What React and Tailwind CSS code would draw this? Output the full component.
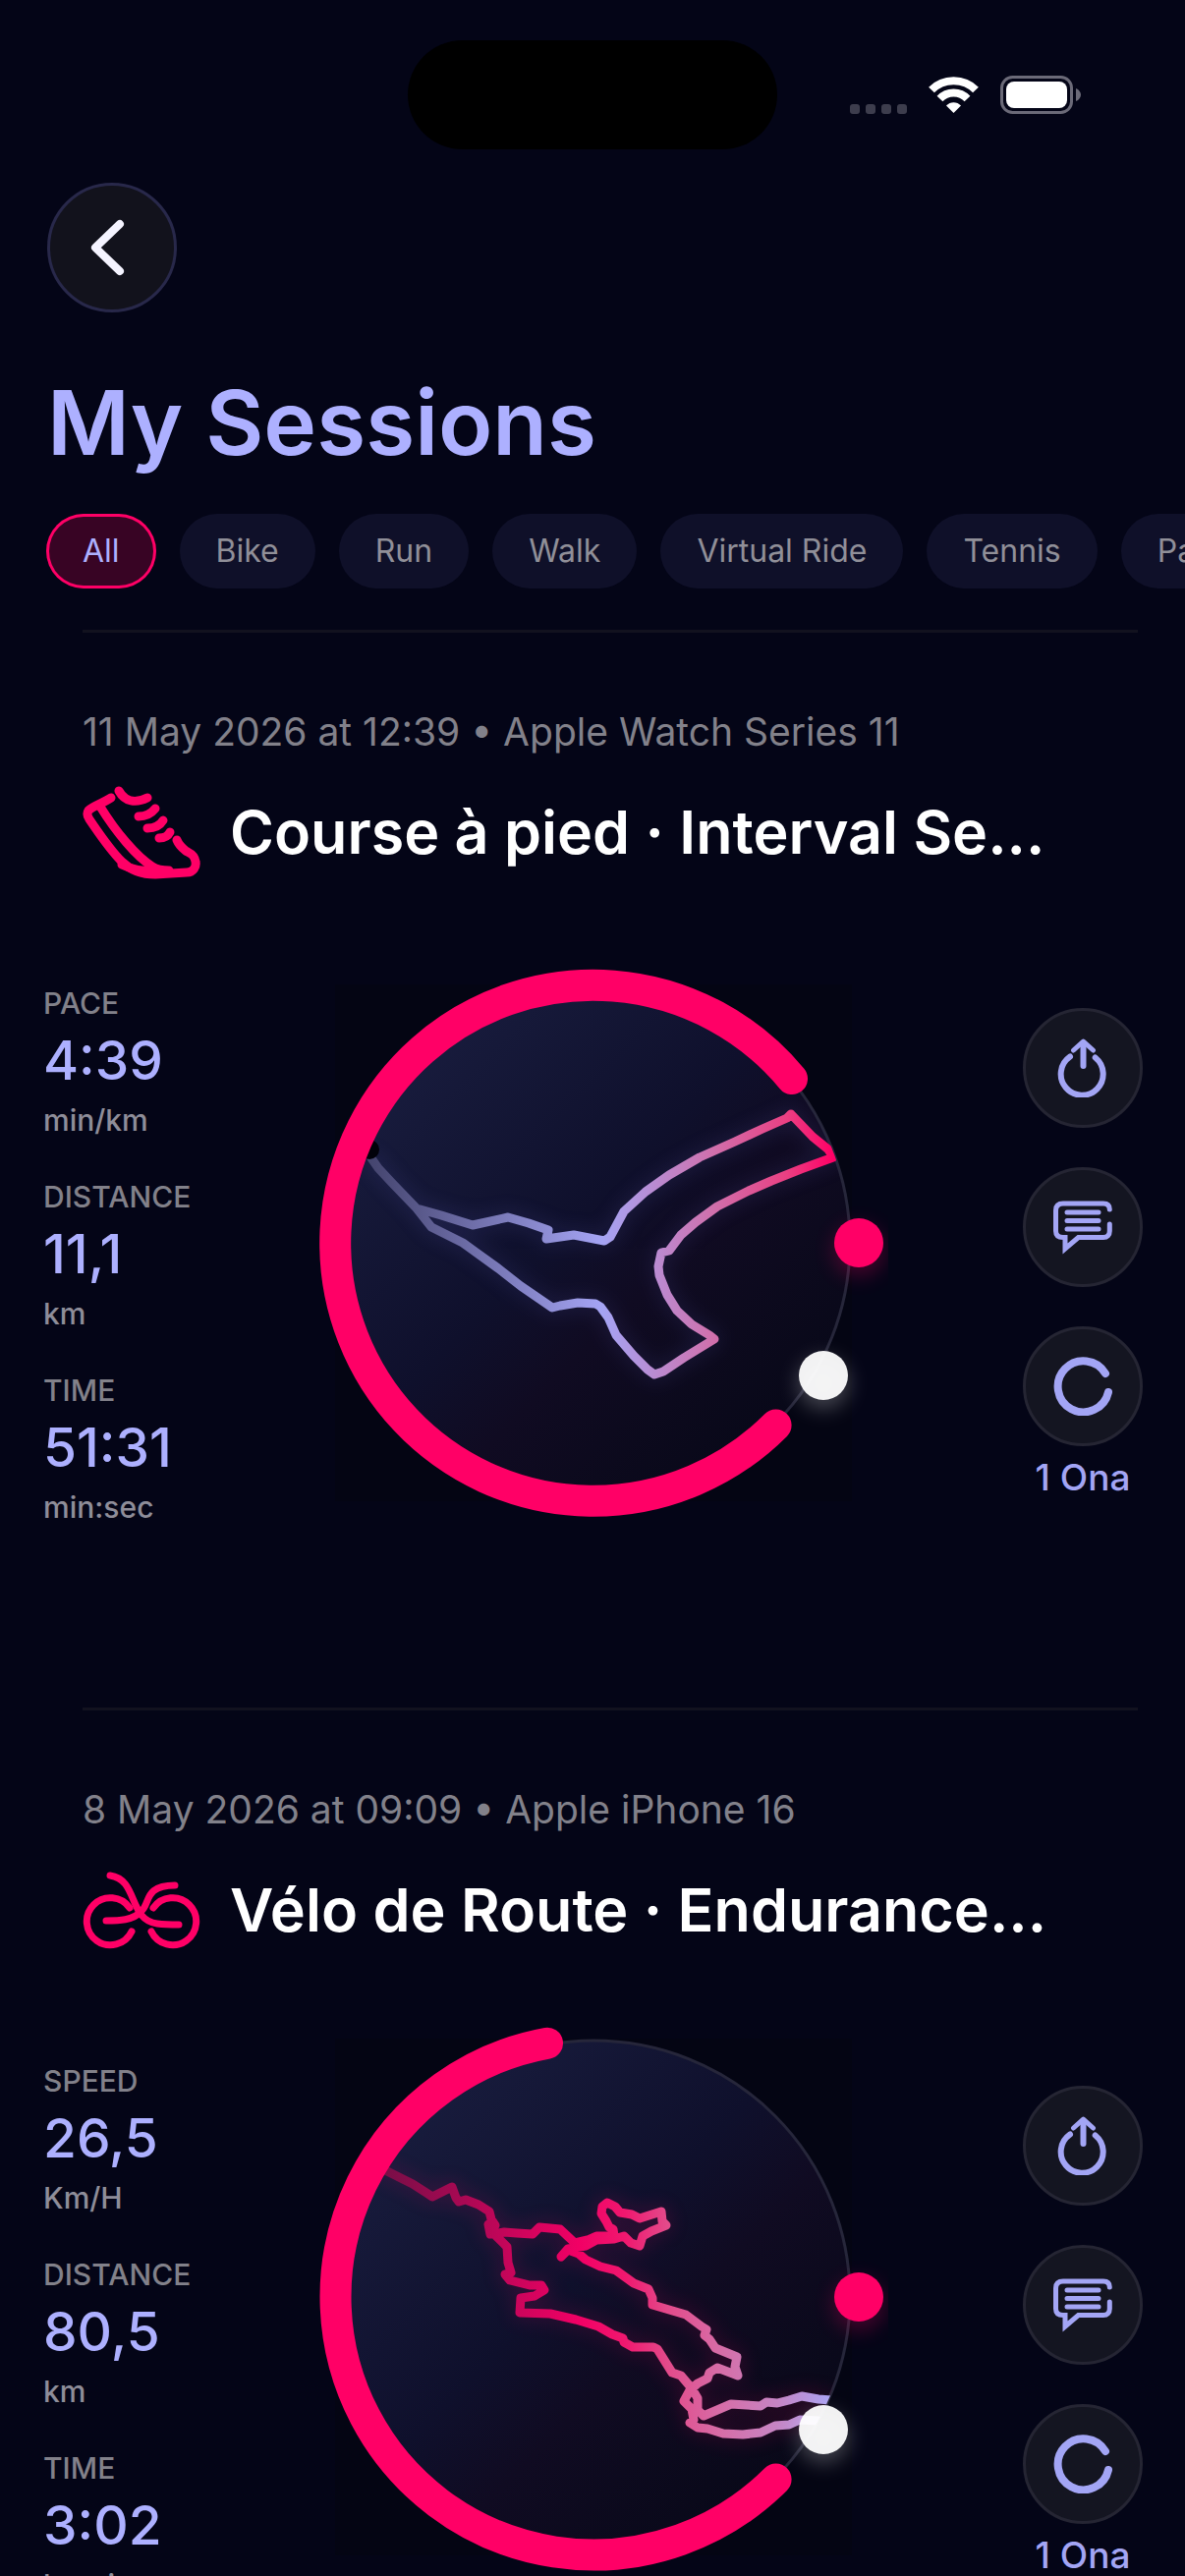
import clsx from "clsx";

const FILTERS = ["All", "Bike", "Run", "Walk", "Virtual Ride", "Tennis", "Padel"];

const SESSIONS = [
  {
    id: "run",
    date: "11 May 2026 at 12:39 • Apple Watch Series 11",
    title: "Course à pied · Interval Se...",
    Icon: ShoeIcon,
    stats: [
      { label: "PACE", value: "4:39", unit: "min/km" },
      { label: "DISTANCE", value: "11,1", unit: "km" },
      { label: "TIME", value: "51:31", unit: "min:sec" },
    ],
    onas: "1 Ona",
    ringClass: "pt-6",
    // progress ring, drawn clockwise from 45° to the end point
    arc: "M485.6 485.6A262.5 262.5 0 1 1 502 133",
    start: [72, 205],
    routeStops: [
      ["0", "#45456f"],
      ["0.5", "#a5a4f4"],
      ["0.74", "#d070ac"],
      ["0.9", "#ea3f82"],
      ["1", "#ff0066"],
    ],
    glow: "#6a6ad0",
    route:
      "M74 214L81 224L94 238L120 265L145 272L177 282L213 274L234 280L254 287L252 296L280 292L311 298L317 294L331 268L353 248L377 231L408 213L444 197L472 184L497 173L501 169L523 192L539 205L544 213L511 225L481 237L458 247L426 263L404 279L389 292L377 308L369 310L366 324L367 333L375 353L385 369L400 383L418 394L423 398L392 417L371 431L362 434L355 429L341 415L323 394L315 376L307 365L302 362L284 361L266 364L258 366L226 344L203 326L167 300L135 284L120 265",
  },
  {
    id: "ride",
    date: "8 May 2026 at 09:09 • Apple iPhone 16",
    title: "Vélo de Route · Endurance...",
    Icon: BikeIcon,
    stats: [
      { label: "SPEED", value: "26,5", unit: "Km/H" },
      { label: "DISTANCE", value: "80,5", unit: "km" },
      { label: "TIME", value: "3:02", unit: "hr:min" },
    ],
    onas: "1 Ona",
    ringClass: "pt-0",
    arc: "M485.6 485.6A262.5 262.5 0 1 1 253 41.7",
    routeStops: [
      ["0", "#700f45"],
      ["0.45", "#f20065"],
      ["0.55", "#f0186f"],
      ["0.64", "#e34a8a"],
      ["0.76", "#d66ea8"],
      ["0.88", "#c585c4"],
      ["1", "#a9a3f5"],
    ],
    glow: "#ff0066",
    route:
      "M84 169L116 185L130 194L136 198L156 188L160 199L163 203L170 201L183 206L194 213L196 221L200 227L193 226L195 236L209 234L222 235L238 236L245 229L266 231L281 245L294 242L303 238L321 238L320 231L316 229L313 223L308 215L309 208L314 204L322 208L327 214L339 216L347 220L369 213L370 223L374 227L359 233L350 238L347 248L338 245L331 238L321 241L303 242L292 248L274 251L267 259L274 252L285 256L292 262L307 269L323 273L341 286L356 292L360 301L360 308L394 318L410 330L415 333L413 339L418 343L424 352L446 361L444 371L447 380L426 372L418 377L416 383L406 388L398 395L392 406L400 414L402 425L398 428L406 433L416 434L432 439L452 440L470 438L485 431L499 430L510 425L529 426M542 405L529 404L512 401L499 405L487 408L476 407L470 411L456 410L440 409L426 415L412 421L406 415L406 403L400 393L389 380L380 377L365 353L361 351L340 351L331 346L330 342L319 338L305 330L282 323L256 317L225 316L226 301L240 299L250 293L247 288L235 288L215 283L210 277L216 275L213 265L212 249L201 238",
  },
];

function ShoeIcon() {
  return (
    <svg viewBox="0 0 120 95" className="w-[120px] shrink-0" fill="none" stroke="#ff0066" strokeWidth="9" strokeLinecap="round" strokeLinejoin="round">
      <path d="M29 12C22 17 11 20 6 25C4 28 5 31 7 34C16 47 27 64 40 77C49 86 61 90 74 90L106 88C113 88 116 82 115 77C114 69 108 68 105 66C100 62 98 60 96 55" />
      <path d="M18 21C34 47 55 72 71 82C77 86 82 86 88 86" />
      <path d="M40 80C52 86 62 87 74 87" />
      <path d="M37 5C43 16 54 18 66 12" />
      <path d="M57 31C65 31 70 28 74 23" />
      <path d="M66 43C74 43 79 40 82 35" />
      <path d="M78 53C84 53 87 51 89 47" />
    </svg>
  );
}

function BikeIcon() {
  return (
    <svg viewBox="0 0 120 79" className="w-[120px] shrink-0" fill="none" stroke="#ff0066" strokeWidth="7" strokeLinecap="round" strokeLinejoin="round">
      <path d="M48 37A24 24 0 1 0 50 61" />
      <path d="M72 37A24 24 0 1 1 70 61" />
      <path d="M28 4C57 8 46 49 76 53C84 54 92 54 98 54" />
      <path d="M94 14C62 14 69 33 60 40C52 50 36 50 24 50" />
    </svg>
  );
}

function ShareIcon() {
  return (
    <svg viewBox="0 0 60 60" className="w-[60px]" fill="none" stroke="#a3a5f5" strokeWidth="6" strokeLinecap="round" strokeLinejoin="round">
      <path d="M17 18.500A21.500 21.500 0 1 0 42.700 19.500" />
      <path d="M30.500 28V5" />
      <path d="M20.500 12L30.500 3L40.500 12" strokeWidth="5" />
    </svg>
  );
}

function CommentIcon() {
  return (
    <svg viewBox="0 0 60 60" className="w-[60px]" fill="none" stroke="#a3a5f5" strokeWidth="5" strokeLinecap="round">
      <path d="M57.300 12C57.300 8 55 6 51 6H10C5 6 2.500 8 2.500 13V34C2.500 38 5 40.500 10 40.500H12V52L25.500 40.500H51C55 40.500 57.300 38 57.300 34V27" />
      <path d="M14 15H46M14 23.500H46M14 32H46" />
    </svg>
  );
}

function OnaIcon() {
  return (
    <svg viewBox="0 0 60 60" className="w-[60px]" fill="none" stroke="#a3a5f5" strokeWidth="8" strokeLinecap="round">
      <path d="M53 17A26 26 0 1 0 56 36" />
    </svg>
  );
}

function StatusBar() {
  return (
    <div className="grid grid-cols-3 items-center pt-[41px]">
      <div />
      <div className="mx-auto h-[111px] w-[376px] rounded-full bg-black" />
      <div className="flex items-center gap-[22px] pl-[61px]">
        <svg viewBox="0 0 58 38" className="h-[38px] w-[58px]" fill="#3d3d4d">
          <rect x="0" y="28" width="10" height="10" rx="3" />
          <rect x="16" y="28" width="10" height="10" rx="3" />
          <rect x="32" y="28" width="10" height="10" rx="3" />
          <rect x="48" y="28" width="10" height="10" rx="3" />
        </svg>
        <svg viewBox="0 0 51 37" className="h-[37px] w-[51px]" fill="none" stroke="#fff" strokeWidth="8">
          <path d="M3 13.500C15 1 36 1 48 13.500" />
          <path d="M11.500 22.500C19 14.500 32 14.500 39.500 22.500" />
          <path d="M18 29.500C22 25 29 25 33 29.500L25.500 37Z" fill="#fff" stroke="none" />
        </svg>
        <svg viewBox="0 0 82 39" className="h-[39px] w-[82px]">
          <rect x="1.500" y="1.500" width="71" height="36" rx="11" fill="none" stroke="#6b6a78" strokeWidth="3" />
          <rect x="6" y="6" width="62" height="27" rx="8" fill="#fff" />
          <path d="M77 13V26C80 25 82 22 82 19.500S80 14 77 13Z" fill="#6b6a78" />
        </svg>
      </div>
    </div>
  );
}

function RouteRing({ session }) {
  const { id, arc, route, routeStops, start, glow } = session;
  return (
    <svg viewBox="0 0 600 600" className="w-[600px]" role="img" aria-label={session.title}>
      <defs>
        <linearGradient id={`${id}-disc`} x1="0.1" y1="0.1" x2="0.9" y2="0.9">
          <stop offset="0" stopColor="#191d3f" />
          <stop offset="0.45" stopColor="#0f102c" />
          <stop offset="0.62" stopColor="#100b22" />
          <stop offset="1" stopColor="#070817" />
        </linearGradient>
        <linearGradient id={`${id}-route`} gradientUnits="userSpaceOnUse" x1="74" y1="0" x2="544" y2="0">
          {routeStops.map(([offset, color]) => (
            <stop key={offset} offset={offset} stopColor={color} />
          ))}
        </linearGradient>
        <clipPath id={`${id}-clip`}>
          <circle cx="300" cy="300" r="261" />
        </clipPath>
        <filter id={`${id}-blur`} x="-50%" y="-50%" width="200%" height="200%">
          <feGaussianBlur stdDeviation="10" />
        </filter>
      </defs>

      <rect x="37" y="37" width="526" height="526" fill="#03050f" opacity="0.5" />
      <circle cx="300" cy="300" r="261" fill={`url(#${id}-disc)`} stroke="#26263a" strokeWidth="3" />

      {/* Route */}
      <g clipPath={`url(#${id}-clip)`} fill="none" strokeLinecap="round" strokeLinejoin="round">
        <path d={route} stroke={glow} strokeWidth="14" opacity="0.15" filter={`url(#${id}-blur)`} />
        <path d={route} stroke={`url(#${id}-route)`} strokeWidth="9" />
      </g>
      {start && <circle cx={start[0]} cy={start[1]} r="10" fill="#02020a" />}

      <path d={arc} fill="none" stroke="#ff0066" strokeWidth="32" strokeLinecap="round" />

      {/* Markers */}
      <circle cx="570" cy="308" r="26" fill="#ff0066" opacity="0.25" filter={`url(#${id}-blur)`} />
      <circle cx="570" cy="300" r="25" fill="#ff0066" />
      <circle cx="534" cy="443" r="26" fill="#fff" opacity="0.25" filter={`url(#${id}-blur)`} />
      <circle cx="534" cy="435" r="25" fill="#fff" opacity="0.94" />
    </svg>
  );
}

function ActionButton({ label, children }) {
  return (
    <button aria-label={label} className="flex size-[122px] items-center justify-center rounded-full border-[3px] border-[#252533] bg-[#141521]">
      {children}
    </button>
  );
}

function Session({ session }) {
  const { Icon } = session;
  return (
    <article className="pb-[173px]">
      <hr className="ml-[84px] mr-12 border-t-[3px] border-[#12121f]" />
      <header className="ml-[84px] mr-12 pt-[75px]">
        <p className="text-[39px] leading-[52px] text-[#82818a]">{session.date}</p>
        <div className="mt-[26px] flex h-[100px] items-center gap-[30px]">
          <Icon />
          <h2 className="truncate text-[61px] font-semibold leading-[84px] text-white">{session.title}</h2>
        </div>
      </header>

      <div className="flex items-start justify-between pl-11 pr-[43px] pt-11">
        <dl className="flex w-[200px] flex-col gap-[37px] pt-[61px]">
          {session.stats.map((s) => (
            <div key={s.label} className="flex flex-col">
              <dt className="text-[30px] font-medium leading-[38px] text-[#82818a]">{s.label}</dt>
              <dd className="text-[55px] font-medium leading-[78px] text-[#adb0ff]">{s.value}</dd>
              <dd className="text-[30px] font-medium leading-[44px] text-[#8e8d99]">{s.unit}</dd>
            </div>
          ))}
        </dl>
        <div className={clsx("flex justify-center", session.ringClass)}>
          <RouteRing session={session} />
        </div>
        <div className="flex w-[200px] flex-col items-end gap-10 pt-[85px]">
          <ActionButton label="Share">
            <ShareIcon />
          </ActionButton>
          <ActionButton label="Comments">
            <CommentIcon />
          </ActionButton>
          <div className="flex w-[122px] flex-col items-center">
            <ActionButton label="Onas">
              <OnaIcon />
            </ActionButton>
            <span className="mt-2 text-[37px] font-medium leading-[48px] text-[#a3a5f5]">{session.onas}</span>
          </div>
        </div>
      </div>
    </article>
  );
}

export default function App() {
  return (
    <div className="h-screen overflow-hidden bg-[#040517] font-['Inter',sans-serif]">
      <StatusBar />

      {/* Header */}
      <div className="px-12 pt-[34px]">
        <button aria-label="Back" className="flex size-[132px] items-center justify-center rounded-full border-[3px] border-[#28284a] bg-[#12121c]">
          <svg viewBox="0 0 36 58" className="mr-2.5 h-[58px] w-9" fill="none" stroke="#f4f3ff" strokeWidth="8" strokeLinecap="round" strokeLinejoin="round">
            <path d="M31 5L6 29L31 53" />
          </svg>
        </button>
        <h1 className="mt-14 text-[91px] font-semibold leading-[112px] text-[#adb0ff]">My Sessions</h1>
      </div>

      {/* Filters */}
      <nav className="mt-[37px] flex gap-6 overflow-hidden pl-[47px]">
        {FILTERS.map((name, i) => (
          <button
            key={name}
            className={clsx(
              "h-[76px] shrink-0 rounded-full px-[37px] text-[32px]",
              i === 0 ? "bg-[#380424] text-[#adb0ff] inset-ring-[3px] inset-ring-[#ff0066]" : "bg-[#0f1029] text-[#908f98]"
            )}
          >
            {name}
          </button>
        ))}
      </nav>

      <main className="mt-[42px]">
        {SESSIONS.map((session) => (
          <Session key={session.id} session={session} />
        ))}
      </main>
    </div>
  );
}
